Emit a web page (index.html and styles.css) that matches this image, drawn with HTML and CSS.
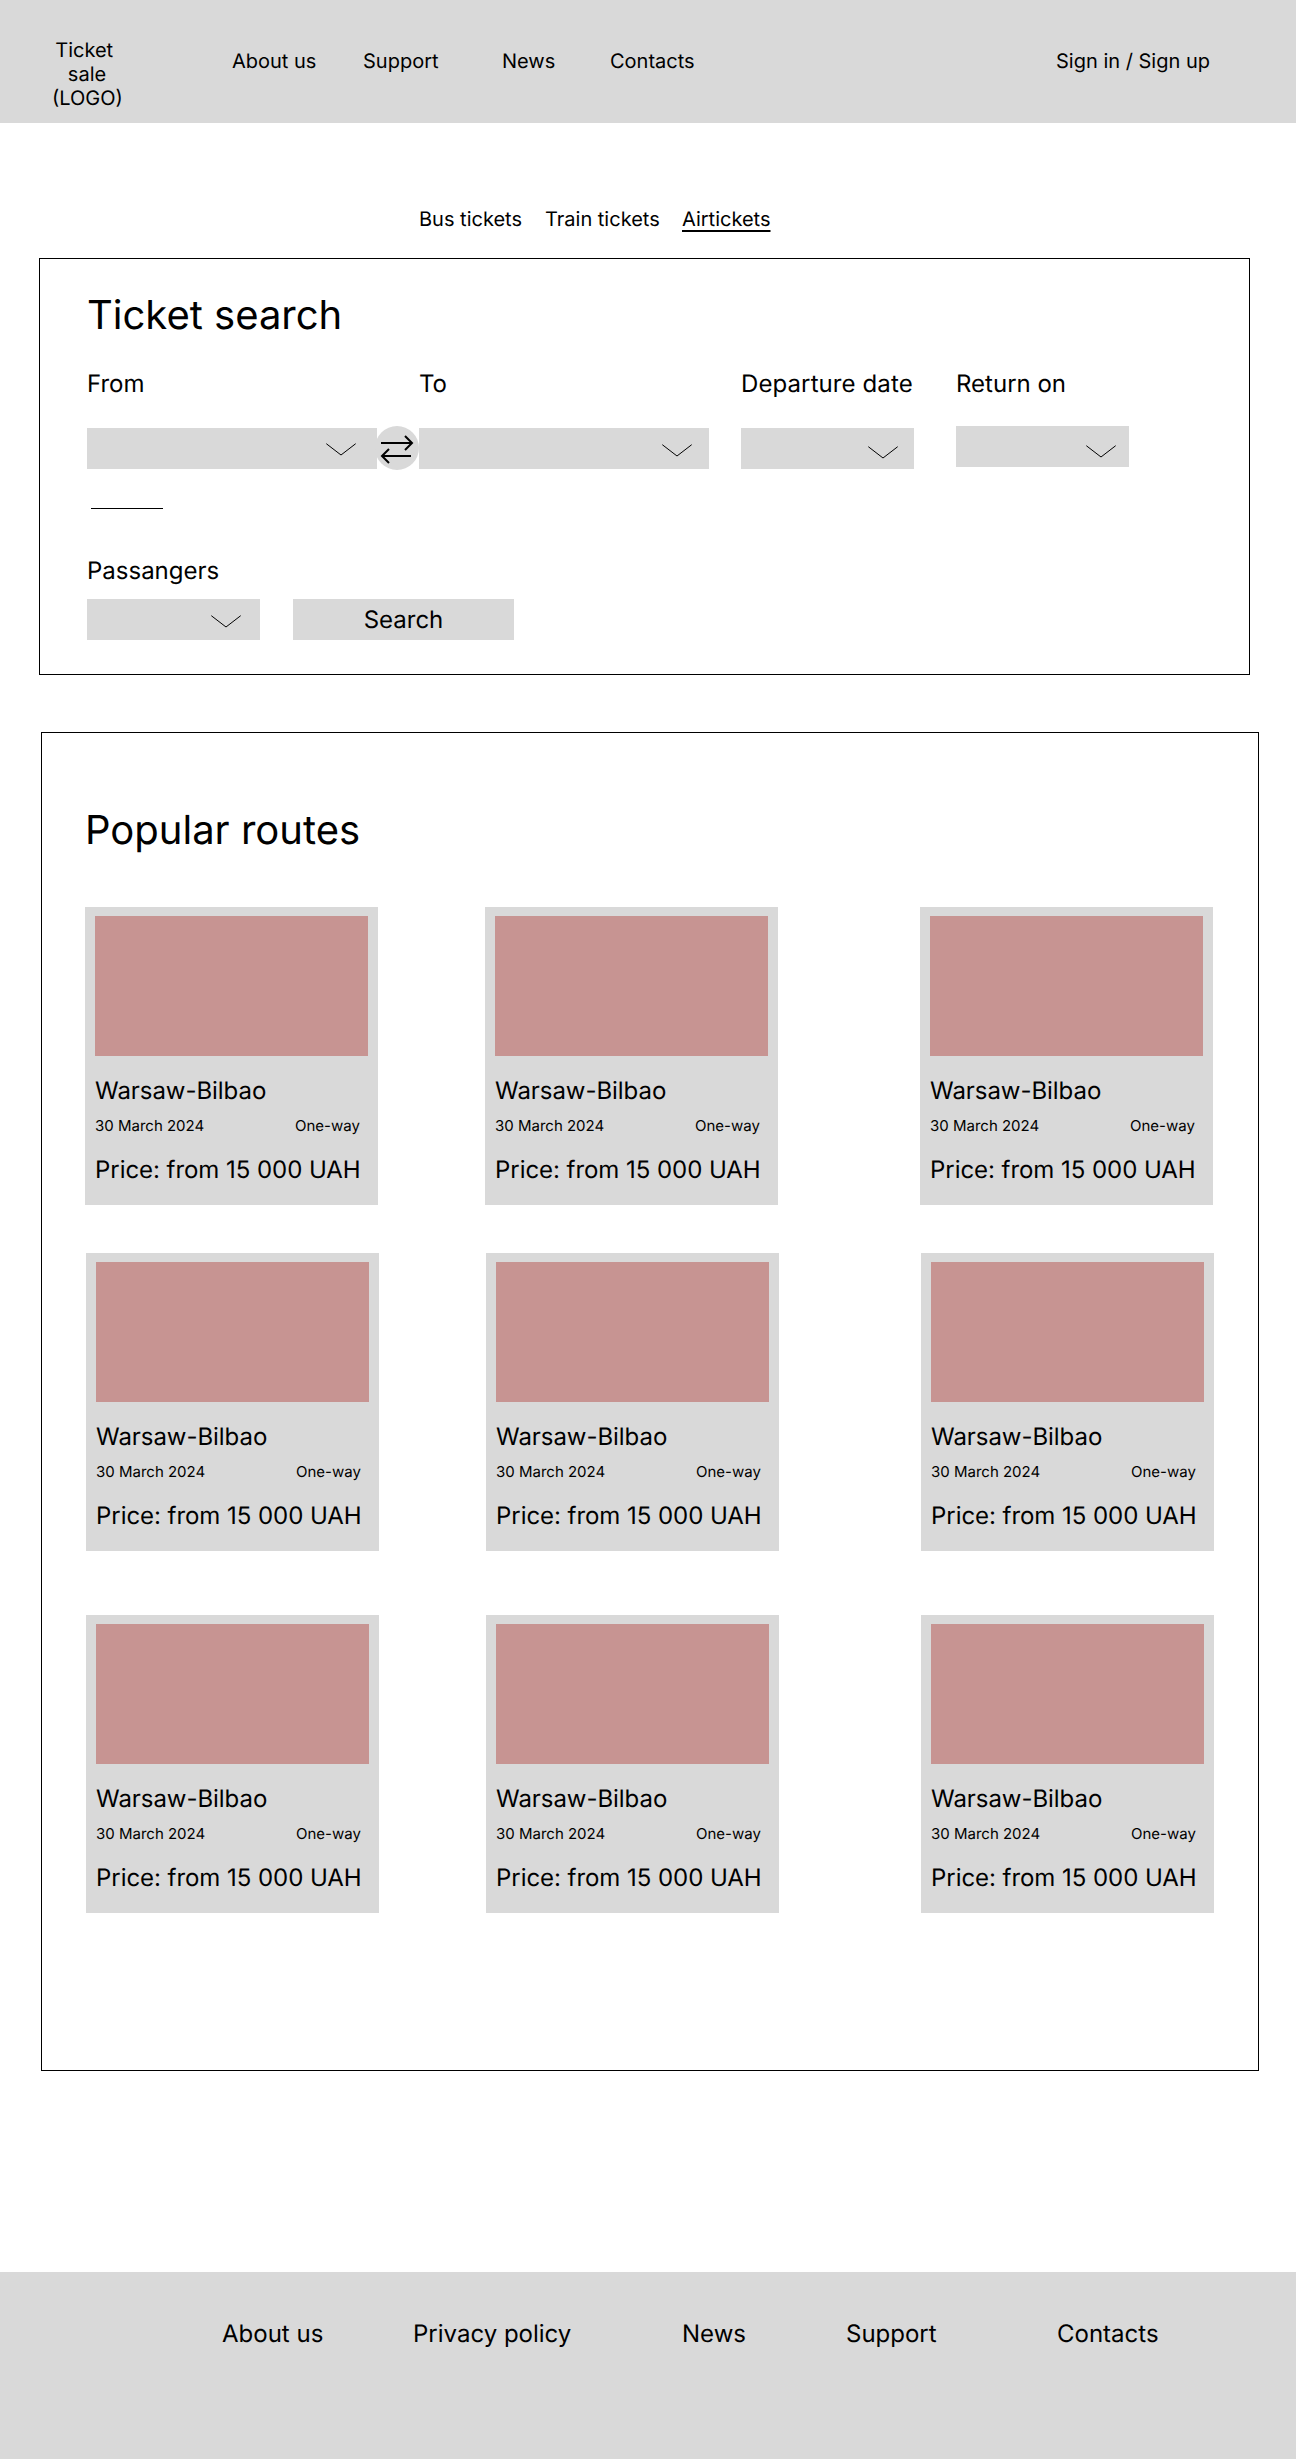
FILE: index.html
```html
<!DOCTYPE html>
<html lang="en">
<head>
<meta charset="utf-8">
<title>Ticket sale</title>
<link rel="stylesheet" href="styles.css">
</head>
<body>
<svg class="sprite" width="0" height="0" aria-hidden="true">
  <symbol id="chevron" viewBox="0 0 30 13"><path d="M.3 .7 15 12 29.7 .7" fill="none" stroke="#000"/></symbol>
  <symbol id="swap" viewBox="0 0 44 44"><path d="M6 17H37M30 10l7 7-7 7M36 30H7M14 23l-7 7 7 7" fill="none" stroke="#000" stroke-width="2"/></symbol>
</svg>
<header class="header">
  <div class="logo">Ticket 
sale
(LOGO)</div>
  <nav class="nav">
    <a>About us</a><a>Support</a><a>News</a><a>Contacts</a><a>Sign in / Sign up</a>
  </nav>
</header>
<main>
  <nav class="tabs"><a>Bus tickets</a><a>Train tickets</a><a class="active">Airtickets</a></nav>
  <section class="search">
    <h1>Ticket search</h1>
    <div class="route">
      <div class="field from"><label>From</label><div class="select"><svg class="chevron"><use href="#chevron"/></svg></div></div>
      <div class="swap"><svg width="44" height="44"><use href="#swap"/></svg></div>
      <div class="field to"><label>To</label><div class="select"><svg class="chevron"><use href="#chevron"/></svg></div></div>
      <div class="field departure"><label>Departure date</label><div class="select"><svg class="chevron"><use href="#chevron"/></svg></div></div>
      <div class="field return"><label>Return on</label><div class="select"><svg class="chevron"><use href="#chevron"/></svg></div></div>
    </div>
    <hr class="rule">
    <div class="bottom">
      <div class="field passengers"><label>Passangers</label><div class="select"><svg class="chevron"><use href="#chevron"/></svg></div></div>
      <button class="submit">Search</button>
    </div>
  </section>
  <section class="popular">
    <h2>Popular routes</h2>
    <div class="cards">
      <article class="card"><div class="photo"></div><h3>Warsaw-Bilbao</h3><div class="meta"><span>30 March 2024</span><span>One-way</span></div><p>Price: from 15 000 UAH</p></article>
      <article class="card"><div class="photo"></div><h3>Warsaw-Bilbao</h3><div class="meta"><span>30 March 2024</span><span>One-way</span></div><p>Price: from 15 000 UAH</p></article>
      <article class="card"><div class="photo"></div><h3>Warsaw-Bilbao</h3><div class="meta"><span>30 March 2024</span><span>One-way</span></div><p>Price: from 15 000 UAH</p></article>
    </div>
    <div class="cards second">
      <article class="card"><div class="photo"></div><h3>Warsaw-Bilbao</h3><div class="meta"><span>30 March 2024</span><span>One-way</span></div><p>Price: from 15 000 UAH</p></article>
      <article class="card"><div class="photo"></div><h3>Warsaw-Bilbao</h3><div class="meta"><span>30 March 2024</span><span>One-way</span></div><p>Price: from 15 000 UAH</p></article>
      <article class="card"><div class="photo"></div><h3>Warsaw-Bilbao</h3><div class="meta"><span>30 March 2024</span><span>One-way</span></div><p>Price: from 15 000 UAH</p></article>
    </div>
    <div class="cards third">
      <article class="card"><div class="photo"></div><h3>Warsaw-Bilbao</h3><div class="meta"><span>30 March 2024</span><span>One-way</span></div><p>Price: from 15 000 UAH</p></article>
      <article class="card"><div class="photo"></div><h3>Warsaw-Bilbao</h3><div class="meta"><span>30 March 2024</span><span>One-way</span></div><p>Price: from 15 000 UAH</p></article>
      <article class="card"><div class="photo"></div><h3>Warsaw-Bilbao</h3><div class="meta"><span>30 March 2024</span><span>One-way</span></div><p>Price: from 15 000 UAH</p></article>
    </div>
  </section>
</main>
<footer class="footer"><a>About us</a><a>Privacy policy</a><a>News</a><a>Support</a><a>Contacts</a></footer>
</body>
</html>
```
FILE: styles.css
```css
* { box-sizing: border-box; }
body {
  margin: 0;
  width: 1296px;
  background: #fff;
  color: #000;
  font: 400 24px/29px Inter, sans-serif;
  text-rendering: geometricPrecision;
}
h1, h2, h3, p { margin: 0; font-weight: 400; }
h1, h2 { font-size: 40px; line-height: 48px; }
a { white-space: nowrap; }
.sprite { display: block; width: 0; height: 0; }

.header {
  display: grid;
  grid-template-columns: 70px 1fr;
  column-gap: 110px;
  height: 123px;
  padding: 38px 0 0 52px;
  background: #d9d9d9;
  font-size: 20px;
  line-height: 24px;
}
.logo { white-space: pre; text-align: center; }
.nav {
  display: grid;
  grid-template-columns: 131px 139px 108px 446px auto;
  justify-content: start;
  height: 24px;
  margin-top: 11px;
}

.tabs {
  display: grid;
  grid-template-columns: 126px 137px auto;
  justify-content: start;
  padding: 84px 0 27px 419px;
  font-size: 20px;
  line-height: 24px;
}
.active {
  text-decoration: underline;
  text-decoration-thickness: 1.5px;
  text-underline-offset: 4px;
}

.search {
  width: 1211px;
  height: 417px;
  margin-left: 39px;
  padding: 32px 0 0 47px;
  border: 1px solid #000;
}
.route { display: flex; align-items: flex-start; margin-top: 30px; }
.field label { display: block; white-space: nowrap; }
.select { width: 173px; height: 41px; margin-top: 30px; background: #d9d9d9; }
.chevron { display: block; width: 30px; height: 13px; }
.from .select, .to .select { width: 290px; }
.from .select { padding: 15px 0 0 239px; }
.to .select { padding: 16px 0 0 243px; }
.departure { margin-left: 32px; }
.departure label { letter-spacing: .1px; }
.departure .select { padding: 18px 0 0 127px; }
.return { margin-left: 42px; }
.return .select { margin-top: 28px; padding: 19px 0 0 130px; }
.swap {
  width: 44px;
  height: 44px;
  margin: 57px 0 0 -2px;
  border-radius: 50%;
  background: #d9d9d9;
}
.swap svg { display: block; }
.rule { width: 72px; height: 1px; margin: 38px 0 0 4px; border: 0; background: #000; }
.bottom { display: flex; align-items: flex-end; gap: 33px; margin-top: 47px; }
.passengers .select { margin-top: 14px; padding: 16px 0 0 124px; }
.submit {
  width: 221px;
  height: 41px;
  padding: 0;
  border: 0;
  background: #d9d9d9;
  color: #000;
  font: inherit;
  text-rendering: inherit;
}

.popular {
  width: 1218px;
  height: 1339px;
  margin: 57px 0 0 41px;
  padding: 73px 0 0 43px;
  border: 1px solid #000;
}
.cards {
  display: grid;
  grid-template-columns: 293px 293px 293px;
  column-gap: 107px;
  margin-top: 53px;
}
.cards .card:last-child { margin-left: 35px; margin-right: -35px; }
.second { margin: 48px 0 0 1px; }
.third { margin: 64px 0 0 1px; }
.card { height: 298px; padding: 9px 10px 0; background: #d9d9d9; white-space: nowrap; }
.photo { height: 140px; background: #c79492; }
.card h3 { margin-top: 20px; font-size: 24px; letter-spacing: -.05px; }
.meta {
  display: grid;
  grid-template-columns: 200px auto;
  justify-content: start;
  margin-top: 12px;
  font-size: 15px;
  line-height: 18px;
}
.card p { margin-top: 20px; letter-spacing: -.05px; }

.footer {
  display: grid;
  grid-template-columns: 191px 269px 164px 211px auto;
  justify-content: start;
  height: 187px;
  margin-top: 201px;
  padding: 47px 0 0 222px;
  background: #d9d9d9;
}
```
